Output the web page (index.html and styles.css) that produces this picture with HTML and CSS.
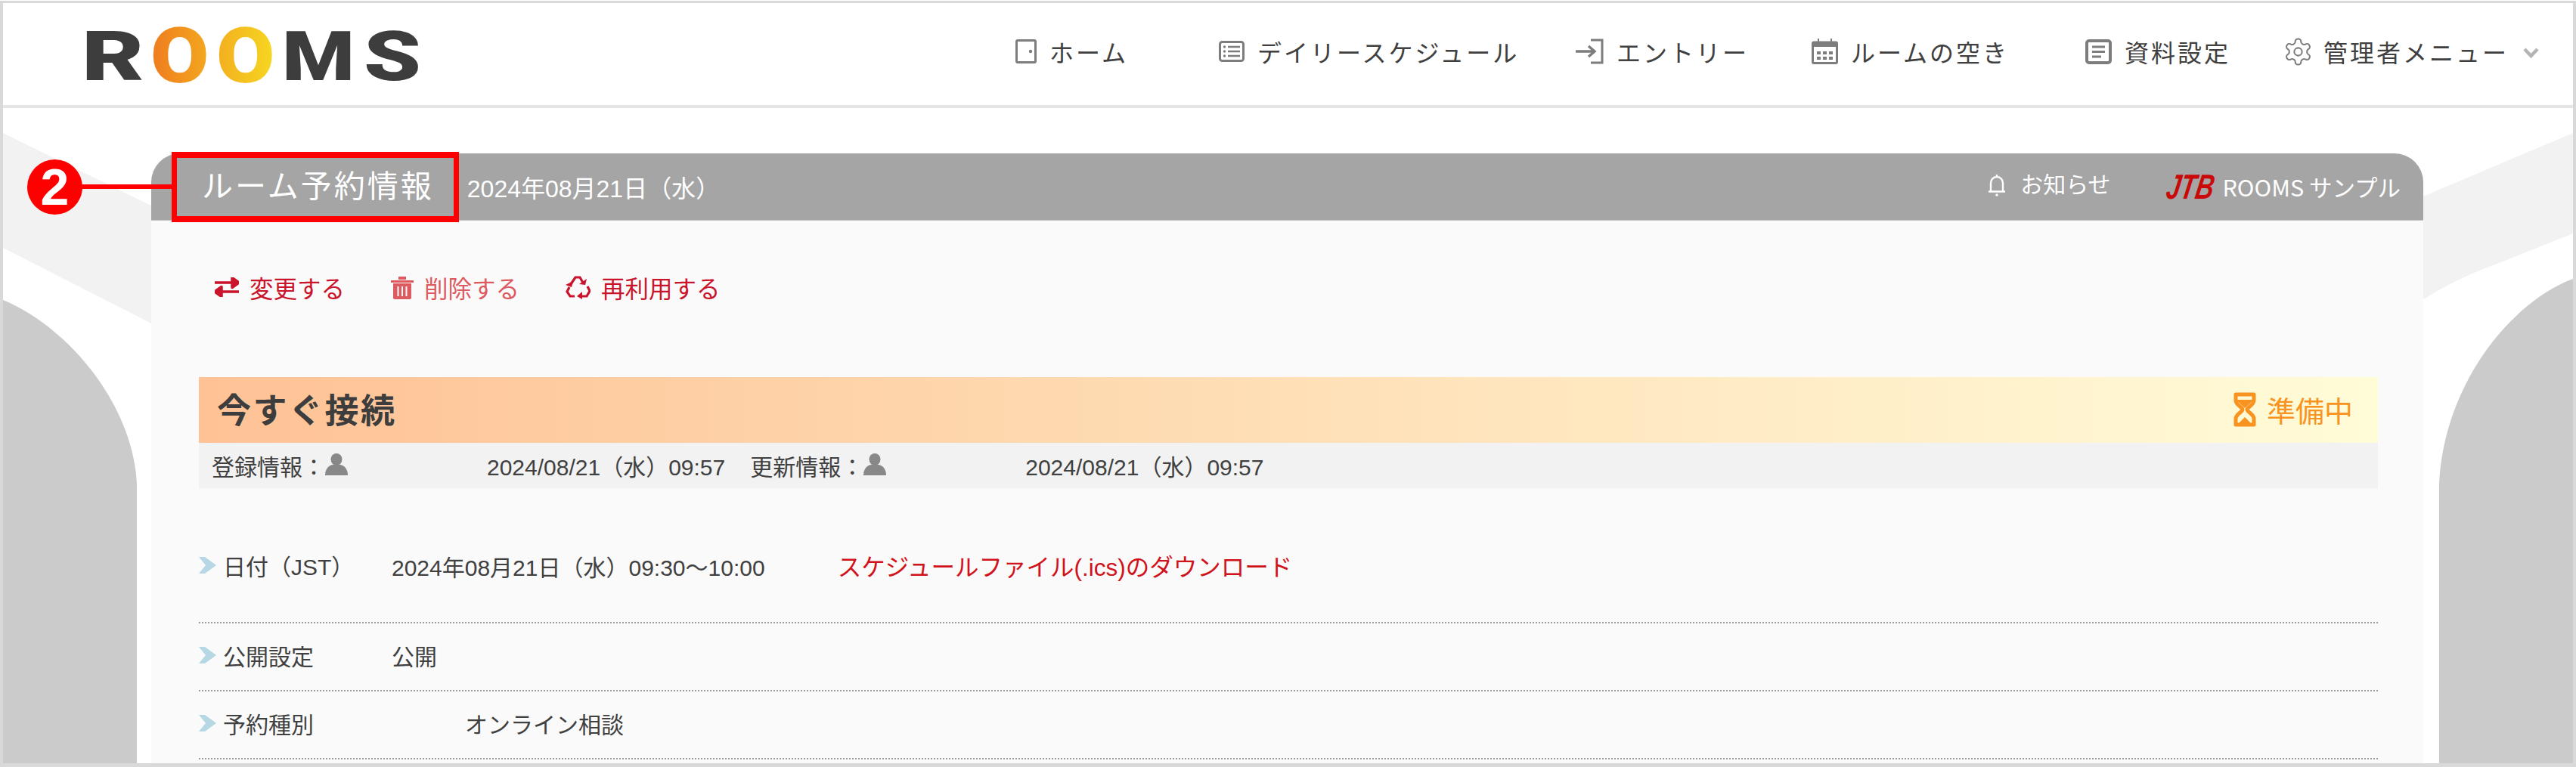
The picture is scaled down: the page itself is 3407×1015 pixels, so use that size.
FILE: index.html
```html
<!DOCTYPE html>
<html lang="ja">

<head>
  <meta charset="utf-8">
  <title>ルーム予約情報</title>
  <link rel="stylesheet" href="styles.css">
</head>

<body>
  <div class="frame">
    <!-- background shapes behind the panel -->
    <svg class="backdrop" viewBox="4 4 3399 1006" width="3399" height="1006">
      <path fill="#f2f2f2" d="M4 176 L210 277 V433 L4 328 Z" />
      <path fill="#f2f2f2" d="M3403 176 L3195 264 V403 Q3240 372 3300 350 L3403 309 Z" />
      <path fill="#cbcbcb" d="M4 397 C85 430 175 530 181 640 V1010 H4 Z" />
      <path fill="#cbcbcb" d="M3403 369 C3320 400 3232 510 3226 640 V1010 H3403 Z" />
    </svg>

    <header class="site-header">
      <div class="logo">
        <span class="logo-letter logo-r">R</span>
        <span class="logo-letter logo-o1">O</span>
        <span class="logo-letter logo-o2">O</span>
        <span class="logo-letter logo-m">M</span>
        <span class="logo-letter logo-s">S</span>
      </div>

      <nav class="site-nav">
        <a class="nav-item">
          <svg class="nav-icon" width="28" height="32" viewBox="0 0 28 32">
            <rect x="1.5" y="1.5" width="25" height="29" rx="1.5" fill="none" stroke="#7d7d7d" stroke-width="3" />
            <circle cx="20" cy="16" r="2.2" fill="#7d7d7d" />
          </svg>
          <span>ホーム</span>
        </a>
        <a class="nav-item">
          <svg class="nav-icon" width="34" height="28" viewBox="0 0 34 28">
            <rect x="1.5" y="1.5" width="31" height="25" rx="3" fill="none" stroke="#7d7d7d" stroke-width="3" />
            <path d="M12 8h16M12 14h16M12 20h16" stroke="#7d7d7d" stroke-width="2.4" />
            <circle cx="7.5" cy="8" r="1.7" fill="#7d7d7d" />
            <circle cx="7.5" cy="14" r="1.7" fill="#7d7d7d" />
            <circle cx="7.5" cy="20" r="1.7" fill="#7d7d7d" />
          </svg>
          <span>デイリースケジュール</span>
        </a>
        <a class="nav-item">
          <svg class="nav-icon" width="37" height="34" viewBox="0 0 37 34">
            <path d="M20 2h15v30H20" fill="none" stroke="#7d7d7d" stroke-width="3" />
            <path d="M0 17h24M17 10l8 7-8 7" fill="none" stroke="#7d7d7d" stroke-width="3.4" />
          </svg>
          <span>エントリー</span>
        </a>
        <a class="nav-item">
          <svg class="nav-icon" width="35" height="34" viewBox="0 0 35 34">
            <rect x="1.5" y="5" width="32" height="27.5" rx="1.5" fill="none" stroke="#7d7d7d" stroke-width="3" />
            <rect x="1.5" y="5" width="32" height="6" fill="#7d7d7d" />
            <path d="M9 0v8M26 0v8" stroke="#7d7d7d" stroke-width="2" />
            <path d="M7 17h5v4H7zM15 17h5v4h-5zM23 17h5v4h-5zM7 24h5v4H7zM15 24h5v4h-5zM23 24h5v4h-5z" fill="#7d7d7d" />
          </svg>
          <span>ルームの空き</span>
        </a>
        <a class="nav-item">
          <svg class="nav-icon" width="35" height="33" viewBox="0 0 35 33">
            <rect x="2" y="2" width="31" height="29" rx="3" fill="none" stroke="#7d7d7d" stroke-width="4" />
            <path d="M9 10h17M9 16.500h17M9 23h12" stroke="#7d7d7d" stroke-width="3" />
          </svg>
          <span>資料設定</span>
        </a>
        <a class="nav-item">
          <svg class="nav-gear" width="41" height="41" viewBox="0 0 24 24" fill="none" stroke="#7d7d7d" stroke-width="1.2">
            <path d="M12.220 2h-.44a2 2 0 0 0-2 2v.18a2 2 0 0 1-1 1.730l-.43.25a2 2 0 0 1-2 0l-.15-.08a2 2 0 0 0-2.730.73l-.22.38a2 2 0 0 0 .73 2.730l.15.1a2 2 0 0 1 1 1.720v.51a2 2 0 0 1-1 1.740l-.15.09a2 2 0 0 0-.73 2.730l.22.38a2 2 0 0 0 2.730.73l.15-.08a2 2 0 0 1 2 0l.43.25a2 2 0 0 1 1 1.730V20a2 2 0 0 0 2 2h.44a2 2 0 0 0 2-2v-.18a2 2 0 0 1 1-1.730l.43-.25a2 2 0 0 1 2 0l.15.08a2 2 0 0 0 2.730-.73l.22-.39a2 2 0 0 0-.73-2.730l-.15-.08a2 2 0 0 1-1-1.740v-.5a2 2 0 0 1 1-1.740l.15-.09a2 2 0 0 0 .73-2.730l-.22-.38a2 2 0 0 0-2.730-.73l-.15.08a2 2 0 0 1-2 0l-.43-.25a2 2 0 0 1-1-1.730V4a2 2 0 0 0-2-2z" />
            <circle cx="12" cy="12" r="3" />
          </svg>
          <span>管理者メニュー</span>
          <svg class="nav-chevron" width="21" height="14" viewBox="0 0 21 14">
            <path d="M2 2l8.500 9L19 2" fill="none" stroke="#b4b4b4" stroke-width="4.500" />
          </svg>
        </a>
      </nav>
    </header>

    <main class="page">
      <section class="panel">
        <div class="panel-head">
          <h1 class="panel-title">ルーム予約情報</h1>
          <span class="panel-date">2024年08月21日（水）</span>
          <a class="panel-notice">
            <svg width="26" height="30" viewBox="0 0 26 30">
              <path d="M13 1v3M5 23V12a8 8 0 0 1 16 0v11M2 23.500h22" fill="none" stroke="#fff" stroke-width="2.400" />
              <circle cx="13" cy="28" r="1.800" fill="#fff" />
            </svg>
            <span>お知らせ</span>
          </a>
          <span class="panel-org">
            <span class="jtb">JTB</span>
            <span>ROOMS サンプル</span>
          </span>
        </div>

        <div class="panel-body">
          <div class="actions">
            <a class="action">
              <svg width="32" height="26" viewBox="0 0 32 26">
                <path d="M0 7h24M32 7l-9-6.500v13zM32 19H8M0 19l9-6.500v13z" fill="#c9142b" stroke="#c9142b" stroke-width="3.500" stroke-linejoin="round" />
              </svg>
              <span>変更する</span>
            </a>
            <a class="action action-delete">
              <svg width="30" height="31" viewBox="0 0 30 31">
                <path d="M0 6h30v3H0zM10 1h10v4H10z" fill="#dc5a60" />
                <path d="M3 10h24v19a2 2 0 0 1-2 2H5a2 2 0 0 1-2-2z" fill="#dc5a60" />
                <path d="M9.500 14v13M15 14v13M20.500 14v13" stroke="#fafafa" stroke-width="2" />
              </svg>
              <span>削除する</span>
            </a>
            <a class="action">
              <svg width="33" height="32" viewBox="0 0 33 32" fill="none" stroke="#c9142b" stroke-width="3.200">
                <path d="M7 12L13 3h6l4 7" />
                <path d="M29 15l3 6-4 7h-7" />
                <path d="M12 28H6l-4-6 3-6" />
                <path d="M18 12l8 1 2-8zM22 22l-7 6 7 4zM0 13l8 3 2-8z" fill="#c9142b" stroke="none" />
              </svg>
              <span>再利用する</span>
            </a>
          </div>

          <div class="status-band">
            <h2 class="status-title">今すぐ接続</h2>
            <span class="status-state">
              <svg width="30" height="46" viewBox="0 0 30 46">
                <path d="M3 3h24v8C27 17 18 20 18 23S27 29 27 35v8H3v-8C3 29 12 26 12 23S3 17 3 11z" fill="none" stroke="#f7931e" stroke-width="5" stroke-linejoin="round" />
                <path d="M3 10h24l-12 11zM7 41l8-8 8 8z" fill="#f7931e" />
              </svg>
              <span>準備中</span>
            </span>
          </div>

          <div class="meta-bar">
            <span class="meta-item">
              <span>登録情報：</span>
              <svg class="user-icon" width="30" height="29" viewBox="0 0 30 29">
                <ellipse cx="15" cy="8" rx="7.500" ry="8" fill="#888" />
                <path d="M0 29c0-9 5-13 10-14h10c5 1 10 5 10 14z" fill="#888" />
              </svg>
              <span class="meta-date">2024/08/21（水）09:57</span>
            </span>
            <span class="meta-item">
              <span>更新情報：</span>
              <svg class="user-icon" width="30" height="29" viewBox="0 0 30 29">
                <ellipse cx="15" cy="8" rx="7.500" ry="8" fill="#888" />
                <path d="M0 29c0-9 5-13 10-14h10c5 1 10 5 10 14z" fill="#888" />
              </svg>
              <span class="meta-date">2024/08/21（水）09:57</span>
            </span>
          </div>

          <dl class="rows">
            <div class="row row-first">
              <dt><svg class="row-mark" width="23" height="22" viewBox="0 0 23 22"><path d="M0 0h8l15 11L8 22H0l9-11z" fill="#b6d8e5" /></svg>日付（JST）</dt>
              <dd>2024年08月21日（水）09:30～10:00<a class="ics-link">スケジュールファイル(.ics)のダウンロード</a></dd>
            </div>
            <div class="row">
              <dt><svg class="row-mark" width="23" height="22" viewBox="0 0 23 22"><path d="M0 0h8l15 11L8 22H0l9-11z" fill="#b6d8e5" /></svg>公開設定</dt>
              <dd>公開</dd>
            </div>
            <div class="row">
              <dt><svg class="row-mark" width="23" height="22" viewBox="0 0 23 22"><path d="M0 0h8l15 11L8 22H0l9-11z" fill="#b6d8e5" /></svg>予約種別</dt>
              <dd class="row-indent">オンライン相談</dd>
            </div>
          </dl>
        </div>
      </section>
    </main>

    <!-- numbered annotation laid over the panel head -->
    <div class="callout-box"></div>
    <div class="callout-line"></div>
    <div class="callout-num">2</div>
  </div>
</body>

</html>
```

FILE: styles.css
```css
* {
  box-sizing: border-box;
}

body {
  margin: 0;
  padding-top: 1px;
  background-color: #fff;
  color: #404040;
  font-family: "Liberation Sans", "Noto Sans CJK JP", sans-serif;
  font-size: 30px;
}

.frame {
  position: relative;
  height: 1014px;
  overflow: hidden;
  border: solid #d9d9d9;
  border-width: 3px 4px 5px;
}

.backdrop {
  position: absolute;
  top: 0;
  left: 0;
}

/* header */
.site-header {
  position: relative;
  display: flex;
  align-items: center;
  height: 139px;
  padding: 0 45px 0 104px;
  background-color: #fff;
  border-bottom: 4px solid #e5e5e5;
}

.logo {
  display: flex;
  align-items: baseline;
  font-family: Roboto, sans-serif;
  font-size: 90px;
  font-weight: 900;
  line-height: 1.2;
  color: #3d3d3d;
}

.logo-letter {
  display: block;
  transform-origin: left center;
}

.logo-r {
  width: 91px;
  transform: scaleX(1.41);
}

.logo-o1,
.logo-o2 {
  width: 87px;
  font-size: 102px;
  color: transparent;
  background-clip: text;
  -webkit-background-clip: text;
}

.logo-o1 {
  background-image: linear-gradient(90deg, #ef7b1e, #f3a81f 80%);
  transform: translateY(3px) scaleX(1.1);
}

.logo-o2 {
  background-image: linear-gradient(90deg, #f3ae1f, #f6d721 80%);
  transform: translateY(3px) scaleX(1.1);
}

.logo-m {
  width: 108px;
  transform: scaleX(1.22);
}

.logo-s {
  width: 75px;
  transform: scaleX(1.35);
}

.site-nav {
  display: grid;
  grid-template-columns: 269px 472px 312px 362px 265px auto;
  align-items: center;
  margin-left: auto;
  margin-bottom: 7px;
  font-size: 32px;
  letter-spacing: 3px;
}

.nav-item {
  display: flex;
  align-items: center;
  gap: 17px;
}

.nav-gear {
  margin: 0 -4px;
}

.nav-chevron {
  margin-left: 2px;
  margin-top: 4px;
}

/* panel */
.page {
  position: relative;
  padding: 60px 198px 0 196px;
}

.panel {
  height: 807px;
  background-color: #fafafa;
  border-radius: 38px 38px 0 0;
}

.panel-head {
  display: flex;
  align-items: baseline;
  height: 89px;
  padding: 0 30px 0 67px;
  background-color: #a5a5a5;
  border-bottom: 1px solid #c4c4c4;
  border-radius: 38px 38px 0 0;
  color: #fff;
  line-height: 88px;
}

.panel-title {
  margin: 0 44px 0 0;
  font-size: 41px;
  font-weight: normal;
  letter-spacing: 3px;
}

.panel-date {
  font-size: 32px;
}

.panel-notice {
  display: flex;
  align-items: center;
  gap: 18px;
  margin-left: auto;
  font-size: 30px;
  align-self: flex-start;
  height: 84px;
}

.panel-org {
  display: flex;
  align-items: center;
  gap: 8px;
  margin-left: 74px;
  font-family: "Noto Sans CJK JP", sans-serif;
  font-size: 30.500px;
  align-self: flex-start;
  height: 88px;
}

/* natural width is about 87px, squeezed to 62 and slanted */
.jtb {
  margin-right: -21px;
  font-family: "Liberation Sans", sans-serif;
  font-size: 46px;
  font-weight: bold;
  font-style: italic;
  line-height: 46px;
  color: #c80a0a;
  transform: skewX(-10deg) scaleX(.72);
  transform-origin: left center;
}

.panel-body {
  padding: 60px 60px 0 63px;
}

.actions {
  display: flex;
  align-items: center;
  gap: 61px;
  height: 56px;
  padding-left: 21px;
  font-size: 31.500px;
  color: #c9142b;
}

.action {
  display: flex;
  align-items: center;
  gap: 14px;
}

.action-delete {
  color: #dc5a60;
}

.status-band {
  display: flex;
  align-items: center;
  justify-content: space-between;
  height: 87px;
  margin-top: 91px;
  padding: 0 33px 0 24px;
  background: linear-gradient(90deg, #fec295, #fffcd8);
}

.status-title {
  margin: -4px 0 0;
  font-size: 45px;
  letter-spacing: 2.500px;
  color: #3d3d3d;
}

.status-state {
  display: flex;
  align-items: center;
  gap: 14px;
  margin-top: -2px;
  font-size: 38px;
  color: #f7931e;
}

.meta-bar {
  display: flex;
  align-items: center;
  gap: 33px;
  height: 60px;
  padding-left: 17px;
  background-color: #f2f2f2;
}

.meta-item {
  display: flex;
  align-items: center;
}

.meta-date {
  margin-left: 184px;
}

.user-icon {
  margin-top: -4px;
}

/* detail rows */
.rows {
  margin: 60px 0 0;
}

.row {
  display: grid;
  grid-template-columns: 255px auto;
  align-items: center;
  height: 90px;
  padding-bottom: 4px;
  border-bottom: 2px dotted #9a9a9a;
}

.row-first {
  height: 119px;
  padding-bottom: 34px;
}

.row dt {
  display: flex;
  align-items: center;
  gap: 9px;
}

.row dd {
  margin: 0;
}

.row-indent {
  padding-left: 97px;
}

.ics-link {
  margin-left: 96px;
  font-size: 31.500px;
  color: #d0121b;
}

/* annotation */
.callout-box {
  position: absolute;
  top: 197px;
  left: 223px;
  width: 380px;
  height: 93px;
  border: solid #f00;
  border-width: 8px 7px;
}

.callout-line {
  position: absolute;
  top: 240px;
  left: 100px;
  width: 125px;
  height: 6px;
  background-color: #f00;
}

.callout-num {
  position: absolute;
  top: 207px;
  left: 32px;
  width: 73px;
  height: 73px;
  border-radius: 50%;
  background-color: #f00;
  color: #fff;
  font-size: 68px;
  font-weight: bold;
  line-height: 73px;
  text-align: center;
}
```
